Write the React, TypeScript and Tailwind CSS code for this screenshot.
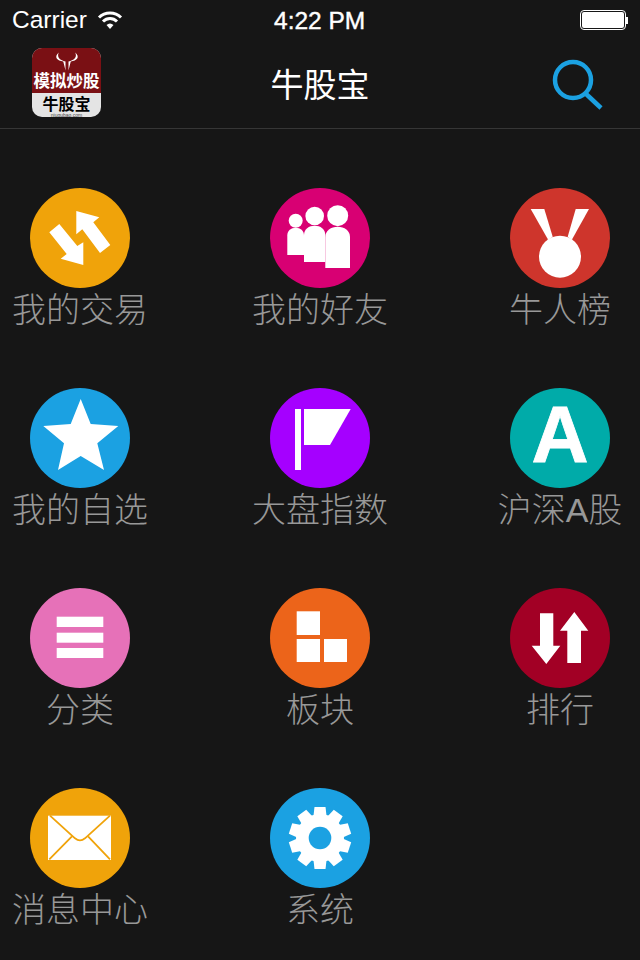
import React from "react";

const cjk = { fontFamily: '"Liberation Sans","Noto Sans CJK SC",sans-serif' };

function Gear() {
  const teeth = Array.from({ length: 10 }, (_, i) => i * 36);
  return (
    <g fill="#fff">
      <circle cx="50" cy="50" r="24" />
      {teeth.map((a) => (
        <polygon key={a} points="44.5,19 55.5,19 57,32 43,32" transform={`rotate(${a} 50 50)`} />
      ))}
      <circle cx="50" cy="50" r="11.3" fill="#1ba1e2" />
    </g>
  );
}

const icons: Record<string, React.ReactNode> = {
  trade: (
    <g fill="#fff">
      <polygon points="46.3,23 69.3,29.3 63.3,34.3 80.3,57 70,65 52.3,41.3 46.3,46.3" />
      <polygon points="19.3,44.3 29.3,36 47.3,58 53.3,54.3 53.3,77 30.7,70.7 36.7,66" />
    </g>
  ),
  friends: (
    <g fill="#fff">
      <circle cx="25.7" cy="32.7" r="7" />
      <path d="M17.3 67V47.5C17.3 42.5 21 39.7 25.7 39.7S34 42.5 34 47.5V67Z" />
      <circle cx="44.7" cy="28" r="9.3" />
      <path d="M34 74V47C34 41 39 37.7 44.7 37.7S55.3 41 55.3 47V74Z" />
      <circle cx="67.7" cy="27.7" r="10.5" />
      <path d="M55.3 80V49C55.3 42.5 61 38.7 67.7 38.7S80 42.5 80 49V80Z" />
    </g>
  ),
  medal: (
    <g fill="#fff">
      <polygon points="20.7,21 34.3,21 42.7,48.7 38.3,52" />
      <polygon points="79,21 65.7,21 57.7,48.7 61.7,52" />
      <circle cx="50" cy="68.7" r="21" />
    </g>
  ),
  star: <polygon fill="#fff" points="50.7,11 60.7,36 88.3,38 67.3,55.3 74,82 50.7,68 28,82 34,55.3 13.3,38 40.7,36" />,
  flag: (
    <g fill="#fff">
      <rect x="25" y="21" width="6" height="61" />
      <polygon points="34,21 80.7,21 60,57 34,57" />
    </g>
  ),
  letter: (
    <text x="50" y="73.7" textAnchor="middle" fill="#fff" stroke="#fff" strokeWidth="0.8" fontSize="79" fontWeight="700" fontFamily='"Liberation Sans",sans-serif'>
      A
    </text>
  ),
  list: (
    <g fill="#fff">
      <rect x="26.7" y="28.7" width="46.6" height="10.3" />
      <rect x="26.7" y="44.7" width="46.6" height="10" />
      <rect x="26.7" y="60" width="46.6" height="10" />
    </g>
  ),
  blocks: (
    <g fill="#fff">
      <rect x="26.7" y="23.3" width="23.3" height="23.7" />
      <rect x="26.7" y="51" width="23.3" height="23" />
      <rect x="54" y="51" width="23" height="23" />
    </g>
  ),
  rank: (
    <g fill="#fff">
      <polygon points="30,25.3 43.3,25.3 43.3,57.7 50.3,57.7 36.3,76 21.7,57.7 30,57.7" />
      <polygon points="64.3,24 78.3,42.7 71,42.7 71,75 57.3,75 57.3,42.7 50,42.7" />
    </g>
  ),
  mail: (
    <g>
      <rect x="18" y="27.7" width="63" height="44.3" fill="#fff" />
      <path
        d="M20 27.7 45 50.3Q50 54.5 55 50.3L80 27.7M19.3 71.3 41.7 48.7M58.3 48.7 80 71.3"
        fill="none"
        stroke="#f0a30a"
        strokeWidth="1.8"
      />
    </g>
  ),
  gear: <Gear />,
};

const items = [
  ["我的交易", "bg-[#f0a30a]", "trade"],
  ["我的好友", "bg-[#d80073]", "friends"],
  ["牛人榜", "bg-[#ce352c]", "medal"],
  ["我的自选", "bg-[#1ba1e2]", "star"],
  ["大盘指数", "bg-[#a500ff]", "flag"],
  ["沪深A股", "bg-[#00aba9]", "letter"],
  ["分类", "bg-[#e671b8]", "list"],
  ["板块", "bg-[#ec641a]", "blocks"],
  ["排行", "bg-[#a20025]", "rank"],
  ["消息中心", "bg-[#f0a30a]", "mail"],
  ["系统", "bg-[#1ba1e2]", "gear"],
];

function Tile({ label, color, icon }: { label: string; color: string; icon: string }) {
  return (
    <div className="flex flex-col items-center">
      <div className={`w-[100px] h-[100px] rounded-full ${color}`}>
        <svg viewBox="0 0 100 100" width="100" height="100">
          {icons[icon]}
        </svg>
      </div>
      <div className="text-[34px] leading-[44px] font-light text-[#989898] whitespace-nowrap" style={cjk}>
        {label}
      </div>
    </div>
  );
}

function Logo() {
  return (
    <div className="w-[69px] h-[69px] rounded-[10px] overflow-hidden flex flex-col bg-[#e4e4e4]" style={cjk}>
      <div className="h-[45px] bg-[#7a1014] flex flex-col items-center">
        <svg viewBox="0 0 40 24" width="30" height="23" className="shrink-0 mt-[2px]">
          <path
            d="M9 0C2 6 7 11 15 12L18 24 18 12C11 10 6 7 9 0ZM31 0C38 6 33 11 25 12L22 24 22 12C29 10 34 7 31 0Z"
            fill="#fff"
          />
        </svg>
        <div className="text-[16.5px] leading-[18px] -mt-[1px] font-bold text-white whitespace-nowrap">模拟炒股</div>
      </div>
      <div className="flex flex-col items-center text-black">
        <div className="text-[16px] leading-[17px] font-bold mt-[3px] whitespace-nowrap">牛股宝</div>
        <div className="text-[5px] leading-[4px] text-[#444] whitespace-nowrap">niugubao.com</div>
      </div>
    </div>
  );
}

export default function App() {
  return (
    <div className="w-[640px] h-[960px] bg-[#161616] overflow-hidden" style={cjk}>
      <div className="h-[40px] flex items-center text-white text-[24.5px] relative px-[12px] justify-between">
        <div className="flex items-center gap-[10px]">
          <span>Carrier</span>
          <svg width="26" height="20" viewBox="0 0 26 20" fill="none" stroke="#fff" strokeWidth="3">
            <path d="M2 7.500C8 1.500 18 1.500 24 7.500" />
            <path d="M6 11.500C10 7.500 16 7.500 20 11.500" />
            <path d="M9.500 15Q13 11.800 16.500 15L13 19Z" fill="#fff" stroke="none" />
          </svg>
        </div>
        <span className="absolute left-[274px] top-[1px] leading-[40px] [-webkit-text-stroke:0.4px_#fff]">4:22 PM</span>
        <div className="flex items-center">
          <div className="w-[46px] h-[20px] rounded-[4px] border border-white p-[1px]">
            <div className="w-full h-full rounded-[2px] bg-white" />
          </div>
          <div className="w-[2px] h-[7px] bg-white" />
        </div>
      </div>
      <div className="h-[89px] border-b border-[#363636] flex items-start">
        <div className="flex-1 pl-[32px] pt-[8px]">
          <Logo />
        </div>
        <div className="text-white text-[33px] leading-[46px] mt-[23px] ml-[4px]">牛股宝</div>
        <div className="flex-1 flex justify-end pr-[36px] pt-[18px]">
          <svg width="52" height="52" viewBox="0 0 52 52" fill="none" stroke="#1ba1e2" strokeWidth="4.500">
            <circle cx="21" cy="22" r="18" />
            <path d="M33 35 49 50" />
          </svg>
        </div>
      </div>
      <div className="grid grid-cols-[160px_160px_160px] gap-x-[80px] auto-rows-[200px] pt-[59px]">
        {items.map(([label, color, icon]) => (
          <Tile key={label} label={label} color={color} icon={icon} />
        ))}
      </div>
    </div>
  );
}
